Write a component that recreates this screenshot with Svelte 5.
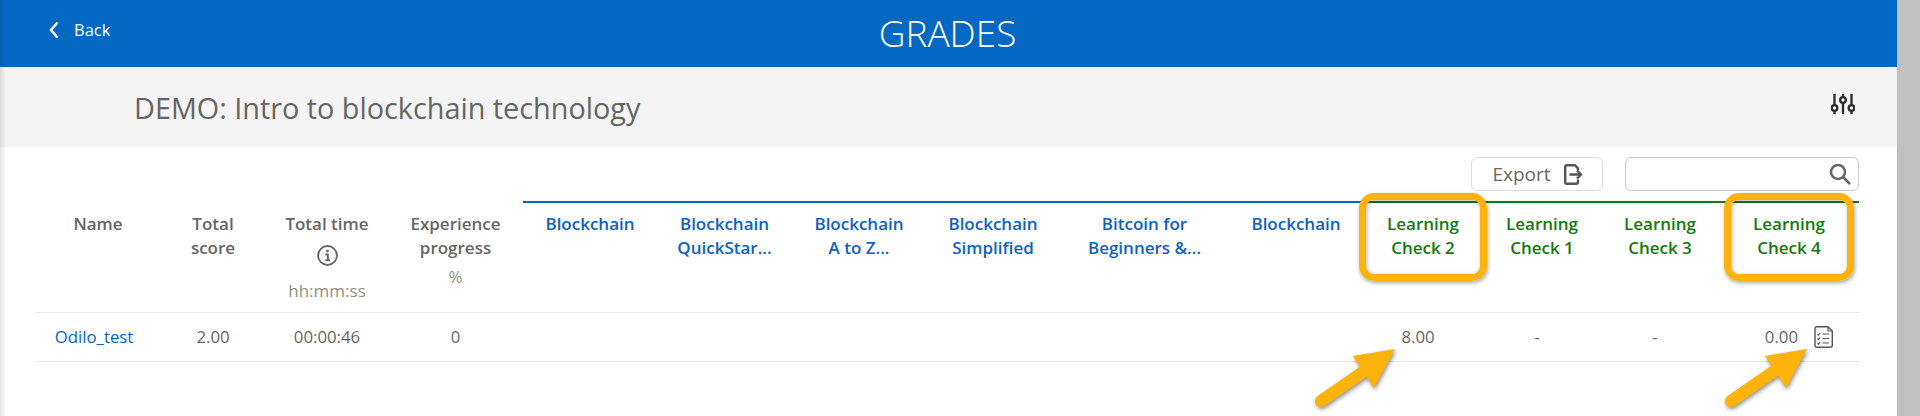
<script>
  const columns = [
    { label: ["Name"], width: 124 },
    { label: ["Total", "score"], width: 106 },
    { label: ["Total time"], width: 122, info: true, hint: "hh:mm:ss" },
    { label: ["Experience", "progress"], width: 135, unit: "%" },
    { label: ["Blockchain"], width: 134, kind: "course" },
    { label: ["Blockchain", "QuickStar..."], width: 135, kind: "course" },
    { label: ["Blockchain", "A to Z..."], width: 134, kind: "course" },
    { label: ["Blockchain", "Simplified"], width: 134, kind: "course" },
    { label: ["Bitcoin for", "Beginners &..."], width: 169, kind: "course" },
    { label: ["Blockchain"], width: 134, kind: "course" },
    { label: ["Learning", "Check 2"], width: 120, kind: "check" },
    { label: ["Learning", "Check 1"], width: 118, kind: "check" },
    { label: ["Learning", "Check 3"], width: 118, kind: "check" },
    { label: ["Learning", "Check 4"], width: 140, kind: "check" }
  ];

  const arrows = [
    { tail: "1321,401 1363,372", head: "1395,349 1353,356 1374,388" },
    { tail: "1731,401 1773,372", head: "1807,349 1765,356 1786,388" }
  ];
</script>

<div class="page">
  <main>
    <header class="topbar">
      <a class="back" href="#back">
        <svg width="10" height="18" viewBox="0 0 10 18"><path d="M8.5 1.5 2 9l6.5 7.500" /></svg>
        Back
      </a>
      <h1>GRADES</h1>
    </header>

    <section class="course-bar">
      <h2>DEMO: Intro to blockchain technology</h2>
      <svg class="sliders" width="24" height="20" viewBox="0 0 24 20">
        <path d="M3.5 0v11M3.500 17v3M12 0v3M12 9v11M20.500 0v11M20.500 17v3" />
        <circle cx="3.500" cy="14" r="2.800" />
        <circle cx="12" cy="6" r="2.800" />
        <circle cx="20.500" cy="14" r="2.800" />
      </svg>
    </section>

    <div class="tools">
      <button class="export">
        Export
        <svg width="18" height="21" viewBox="0 0 18 21"><path d="M14 6V4.500L11 1.200H3Q1.200 1.200 1.200 3v15q0 1.800 1.800 1.800h9q2 0 2-1.800v-2.500M5.500 10.500H17M13 6.500l4 4-4 4" /></svg>
      </button>
      <div class="search">
        <svg width="22" height="22" viewBox="0 0 22 22"><circle cx="9" cy="9" r="7" /><path d="m14 14 7 7" /></svg>
      </div>
    </div>

    <table>
      <colgroup>
        {#each columns as col}
          <col style="width: {col.width}px" />
        {/each}
      </colgroup>
      <thead>
        <tr>
          {#each columns as col}
            <th class={col.kind}>
              {#each col.label as line}
                <div>{line}</div>
              {/each}
              {#if col.info}
                <svg class="info" width="21" height="21" viewBox="0 0 20 20">
                  <circle cx="10" cy="10" r="9" />
                  <path d="M8 9h2.300v5.500M8 14.500h4.500" />
                  <circle class="dot" cx="10" cy="5.800" r="1.300" />
                </svg>
              {/if}
              {#if col.hint}<div class="hint">{col.hint}</div>{/if}
              {#if col.unit}<div class="unit">{col.unit}</div>{/if}
            </th>
          {/each}
        </tr>
      </thead>
      <tbody>
        <tr>
          <td class="name"><a href="#user">Odilo_test</a></td>
          <td>2.00</td>
          <td>00:00:46</td>
          <td>0</td>
          <td></td>
          <td></td>
          <td></td>
          <td></td>
          <td></td>
          <td></td>
          <td class="grade">8.00</td>
          <td class="grade">-</td>
          <td class="grade">-</td>
          <td class="grade last">
            0.00
            <svg class="sheet" width="19" height="22" viewBox="0 0 19 22">
              <path d="M3 .7h11L18.300 5v14.300q0 2-2 2H3q-2 0-2-2V2.700q0-2 2-2Z" />
              <path d="M14 .7V5h4.300M8.500 8H15M8.500 12.500H15M8.500 17H15M3.500 8l1 1 1.500-2M3.500 12.500l1 1 1.500-2M3.500 17l1 1 1.500-2" class="thin" />
            </svg>
          </td>
        </tr>
      </tbody>
    </table>
  </main>
  <div class="scrollbar"></div>

  <div class="callout first"></div>
  <div class="callout second"></div>
  <svg class="arrows" width="1920" height="416" viewBox="0 0 1920 416">
    {#each arrows as arrow}
      <g>
        <polyline points={arrow.tail} />
        <polygon points={arrow.head} />
      </g>
    {/each}
  </svg>
</div>

<style>
  :global(body) {
    margin: 0;
    overflow: hidden;
    background: #fff;
  }

  .page {
    position: relative;
    display: flex;
    width: 1920px;
    height: 416px;
    overflow: hidden;
    font-family: "Open Sans", sans-serif;
    color: #666;
  }

  main {
    position: relative;
    flex: 1;
    min-width: 0;
  }

  main::after {
    content: "";
    position: absolute;
    top: 0;
    bottom: 0;
    left: 0;
    width: 6px;
    background: linear-gradient(to right, rgba(0, 0, 0, 0.1), rgba(0, 0, 0, 0));
  }

  .scrollbar {
    width: 23px;
    background: #c1c1c1;
  }

  .topbar {
    position: relative;
    display: flex;
    align-items: center;
    justify-content: center;
    height: 67px;
    background: #0368c4;
  }

  .back {
    position: absolute;
    left: 49px;
    top: 21px;
    display: flex;
    align-items: center;
    gap: 15px;
    color: #fff;
    font-size: 16.500px;
    line-height: 18px;
    text-decoration: none;
  }

  .back svg path {
    fill: none;
    stroke: #fff;
    stroke-width: 2.500;
  }

  h1 {
    margin: 0 0 2px -2px;
    color: #fff;
    font-size: 37px;
    font-weight: 300;
    line-height: 60px;
  }

  .course-bar {
    display: flex;
    align-items: center;
    justify-content: space-between;
    height: 80px;
    padding: 0 42px 0 134px;
    background: #f4f4f4;
  }

  h2 {
    margin: 0;
    font-size: 28.800px;
    font-weight: 400;
    color: #666;
  }

  .sliders {
    margin-bottom: 6px;
  }

  .sliders path,
  .sliders circle {
    fill: none;
    stroke: #2b2b2b;
    stroke-width: 2.300;
  }

  .tools {
    display: flex;
    justify-content: flex-end;
    gap: 22px;
    height: 34px;
    padding: 10px 38px 0 0;
  }

  .export {
    display: flex;
    align-items: center;
    justify-content: center;
    gap: 13px;
    box-sizing: border-box;
    width: 132px;
    height: 34px;
    padding: 0;
    border: 1px solid #ddd;
    border-radius: 6px;
    background: #fff;
    color: #666;
    font: 19px "Open Sans", sans-serif;
  }

  .export svg path {
    fill: none;
    stroke: #555;
    stroke-width: 2.400;
  }

  .search {
    display: flex;
    align-items: center;
    justify-content: flex-end;
    box-sizing: border-box;
    width: 234px;
    height: 34px;
    padding-right: 7px;
    border: 1px solid #ccc;
    border-radius: 6px;
  }

  .search svg * {
    fill: none;
    stroke: #666;
    stroke-width: 2.500;
  }

  table {
    width: 1823px;
    margin: 10px 0 0 36px;
    border-collapse: collapse;
    table-layout: fixed;
    font-size: 16.800px;
  }

  th {
    height: 110px;
    padding: 9px 0 0;
    box-sizing: border-box;
    border-top: 2px solid transparent;
    border-bottom: 1px solid #e6e6e6;
    font-size: 17px;
    font-weight: 600;
    line-height: 24px;
    text-align: center;
    vertical-align: top;
  }

  th.course {
    border-top-color: #0368c4;
    color: #0f62c0;
  }

  th.check {
    border-top-color: #157a0e;
    color: #157a0e;
  }

  .info {
    display: block;
    margin: 9px auto 0;
  }

  .info circle,
  .info path {
    fill: none;
    stroke: #666;
    stroke-width: 1.800;
  }

  .info .dot {
    fill: #666;
    stroke: none;
  }

  .hint,
  .unit {
    color: #8f8f82;
    font-size: 17px;
    font-weight: 400;
  }

  .hint {
    margin-top: 15px;
    line-height: 20px;
  }

  .unit {
    margin-top: 2px;
    line-height: 30px;
  }

  td {
    height: 48px;
    padding: 0;
    border-bottom: 1px solid #e6e6e6;
    text-align: center;
    vertical-align: middle;
    line-height: 24px;
  }

  td a {
    color: #0f62c0;
    text-decoration: none;
  }

  .name {
    padding-right: 8px;
  }

  .grade {
    padding-right: 10px;
  }

  .last {
    position: relative;
    padding-right: 61px;
    text-align: right;
  }

  .sheet {
    position: absolute;
    right: 26px;
    top: 13px;
  }

  .sheet path {
    fill: none;
    stroke: #555;
    stroke-width: 1.400;
  }

  .sheet .thin {
    stroke-width: 1.200;
  }

  .callout {
    position: absolute;
    top: 193px;
    box-sizing: border-box;
    height: 88px;
    border: 7px solid #fdb309;
    border-radius: 15px;
    box-shadow: 1px 2px 4px rgba(0, 0, 0, 0.35), inset 1px 1px 4px rgba(0, 0, 0, 0.3);
  }

  .first {
    left: 1359px;
    width: 128px;
  }

  .second {
    left: 1724px;
    width: 130px;
  }

  .arrows {
    position: absolute;
    top: 0;
    left: 0;
    pointer-events: none;
    filter: drop-shadow(1px 2px 2px rgba(0, 0, 0, 0.45));
  }

  .arrows polyline {
    fill: none;
    stroke: #fdb309;
    stroke-width: 12;
    stroke-linecap: round;
  }

  .arrows polygon {
    fill: #fdb309;
  }
</style>
